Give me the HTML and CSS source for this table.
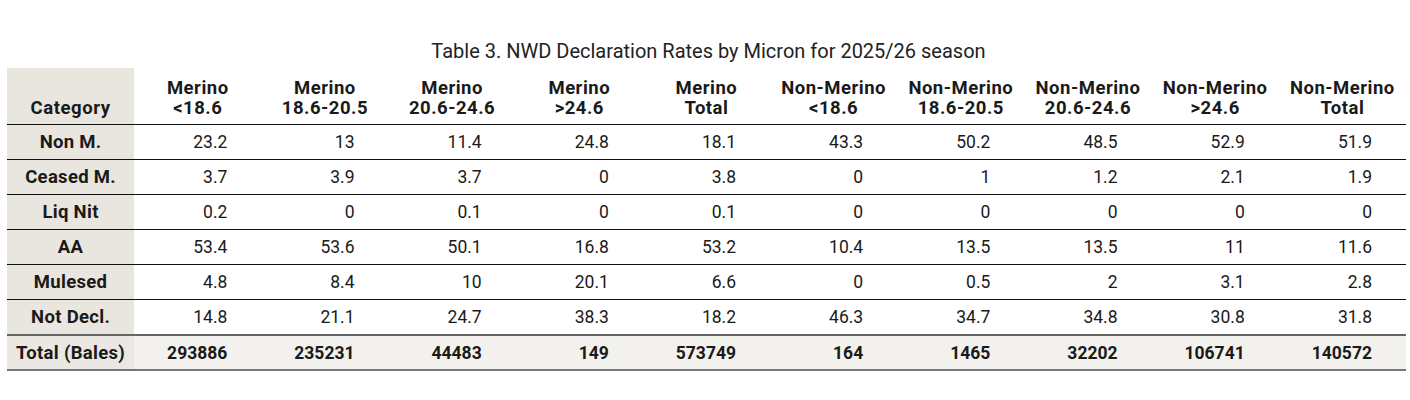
FILE: index.html
```html
<!DOCTYPE html>
<html>
<head>
<meta charset="utf-8">
<link rel="stylesheet" href="styles.css">
</head>
<body>
<div class="wrap">
  <div class="title">Table 3. NWD Declaration Rates by Micron for 2025/26 season</div>
  <table class="rates">
    <thead>
      <tr>
        <th class="cat">Category</th>
        <th>Merino<br>&lt;18.6</th>
        <th>Merino<br>18.6-20.5</th>
        <th>Merino<br>20.6-24.6</th>
        <th>Merino<br>&gt;24.6</th>
        <th>Merino<br>Total</th>
        <th>Non-Merino<br>&lt;18.6</th>
        <th>Non-Merino<br>18.6-20.5</th>
        <th>Non-Merino<br>20.6-24.6</th>
        <th>Non-Merino<br>&gt;24.6</th>
        <th>Non-Merino<br>Total</th>
      </tr>
    </thead>
    <tbody>
      <tr><td class="cat">Non M.</td><td>23.2</td><td>13</td><td>11.4</td><td>24.8</td><td>18.1</td><td>43.3</td><td>50.2</td><td>48.5</td><td>52.9</td><td>51.9</td></tr>
      <tr><td class="cat">Ceased M.</td><td>3.7</td><td>3.9</td><td>3.7</td><td>0</td><td>3.8</td><td>0</td><td>1</td><td>1.2</td><td>2.1</td><td>1.9</td></tr>
      <tr><td class="cat">Liq Nit</td><td>0.2</td><td>0</td><td>0.1</td><td>0</td><td>0.1</td><td>0</td><td>0</td><td>0</td><td>0</td><td>0</td></tr>
      <tr><td class="cat">AA</td><td>53.4</td><td>53.6</td><td>50.1</td><td>16.8</td><td>53.2</td><td>10.4</td><td>13.5</td><td>13.5</td><td>11</td><td>11.6</td></tr>
      <tr><td class="cat">Mulesed</td><td>4.8</td><td>8.4</td><td>10</td><td>20.1</td><td>6.6</td><td>0</td><td>0.5</td><td>2</td><td>3.1</td><td>2.8</td></tr>
      <tr><td class="cat">Not Decl.</td><td>14.8</td><td>21.1</td><td>24.7</td><td>38.3</td><td>18.2</td><td>46.3</td><td>34.7</td><td>34.8</td><td>30.8</td><td>31.8</td></tr>
      <tr class="total"><td class="cat">Total (Bales)</td><td>293886</td><td>235231</td><td>44483</td><td>149</td><td>573749</td><td>164</td><td>1465</td><td>32202</td><td>106741</td><td>140572</td></tr>
    </tbody>
  </table>
</div>
</body>
</html>
```

FILE: styles.css
```css
html, body {
  margin: 0;
  padding: 0;
  background: #ffffff;
}

body {
  font-family: Roboto, "Liberation Sans", sans-serif;
  color: #1a1a1a;
}

.wrap {
  padding: 40px 4px 0 7px;
}

.title {
  text-align: center;
  font-size: 20px;
  line-height: 22px;
  height: 28px;
  color: #222;
  padding-left: 4px;
}

.rates {
  width: 1399px;
  border-collapse: collapse;
  table-layout: fixed;
}

.rates th {
  height: 50px;
  font-weight: 700;
  font-size: 18.5px;
  letter-spacing: 0.5px;
  line-height: 20px;
  text-align: center;
  vertical-align: bottom;
  padding: 0 0 6px 0;
  border-bottom: 1.5px solid #111;
}

.rates td {
  height: 34px;
  padding: 0 34px 0 0;
  font-size: 17.5px;
  text-align: right;
  vertical-align: middle;
  border-bottom: 1.5px solid #111;
}

.rates .cat {
  background: #e9e5df;
  text-align: center;
  font-weight: 700;
  font-size: 18.5px;
  letter-spacing: 0.3px;
  padding: 0;
}

.rates th.cat {
  letter-spacing: 0.6px;
  padding-bottom: 6px;
}

.rates .total td {
  height: 33px;
  background: #f3f1ed;
  font-weight: 700;
  border-top: 2px solid #666;
  border-bottom: 2px solid #777;
}

.rates .total td.cat {
  background: #ebe7e2;
}
```
